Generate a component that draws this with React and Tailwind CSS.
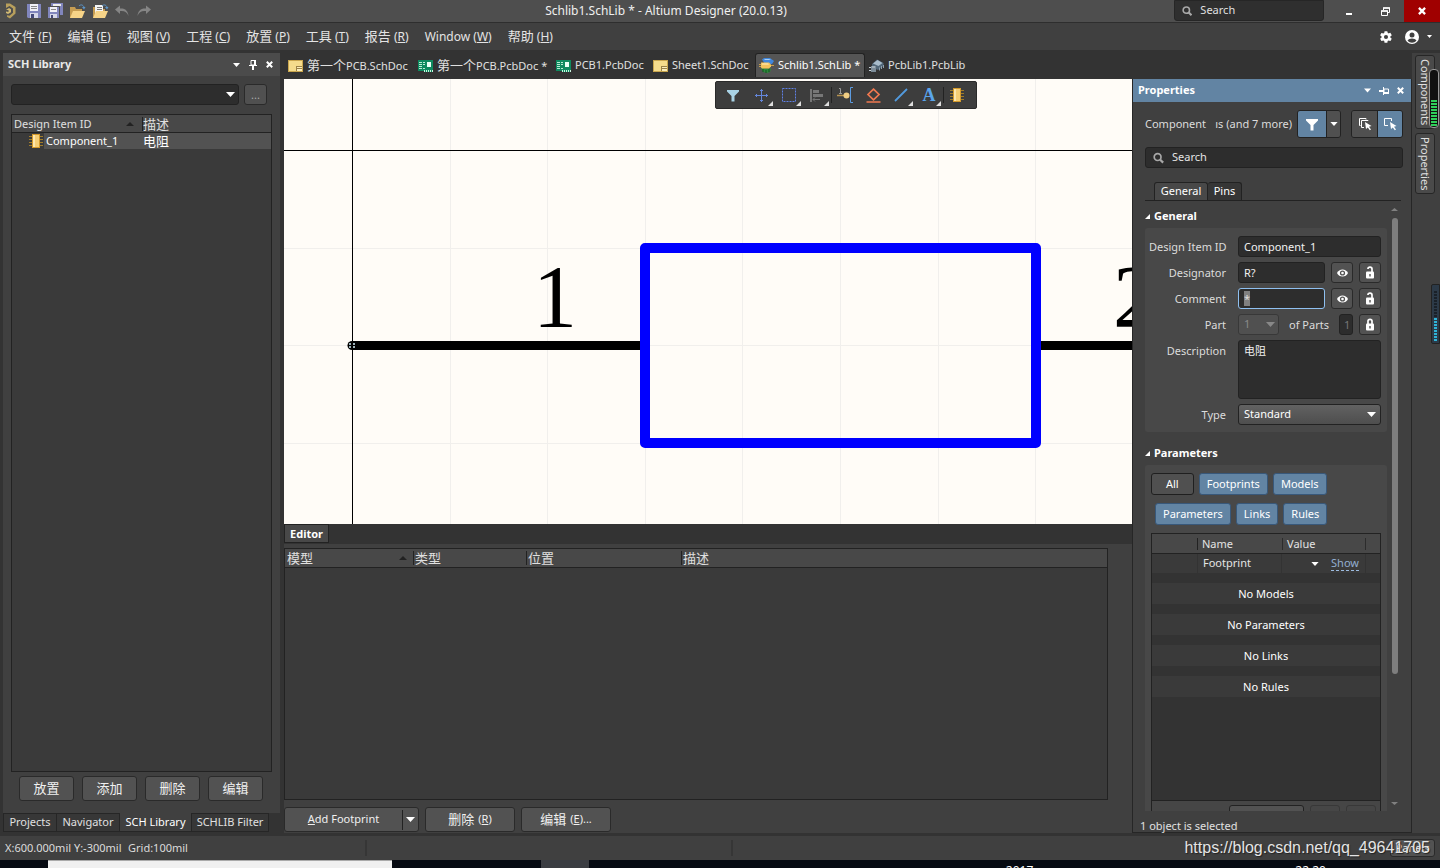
import React, { useEffect, useRef } from "react";

const menus = [
  ["文件", "F"],
  ["编辑", "E"],
  ["视图", "V"],
  ["工程", "C"],
  ["放置", "P"],
  ["工具", "T"],
  ["报告", "R"],
  ["Window", "W"],
  ["帮助", "H"],
];

const documents = [
  { name: "第一个PCB.SchDoc", kind: "sch", width: "w-[130px]" },
  { name: "第一个PCB.PcbDoc *", kind: "pcb", width: "w-[138px]" },
  { name: "PCB1.PcbDoc", kind: "pcb", width: "w-[97px]" },
  { name: "Sheet1.SchDoc", kind: "sch", width: "w-[106px]" },
  { name: "Schlib1.SchLib *", kind: "schlib", width: "w-[110px]", active: true },
  { name: "PcbLib1.PcbLib", kind: "pcblib", width: "w-[110px]" },
];

const button =
  "flex items-center justify-center rounded-[3px] border border-[#2a2a2a] bg-[#525252] text-[#f0f0f0]";
const field =
  "h-[21px] min-w-0 rounded-[3px] border border-[#222] bg-[#2d2d2d] px-[5px] text-[11px] text-[#f0f0f0] outline-none";

/* ---------- icons ---------- */

const Caret = ({ className = "text-white" }) => (
  <svg width="9" height="5" viewBox="0 0 9 5" className={className}>
    <path d="M0 0h9L4.500 5z" fill="currentColor" />
  </svg>
);

const SortMark = () => (
  <svg width="8" height="4" viewBox="0 0 8 4">
    <path d="M0 4h8L4 0z" fill="#222" />
  </svg>
);

const PinIcon = ({ sideways = false }) => (
  <svg width="10" height="10" viewBox="0 0 10 10" className={sideways ? "rotate-90" : ""}>
    <path d="M3 .5h4V5H3z" fill="none" stroke="#fff" />
    <path d="M6 0h2v6H6zM1 5h8v1H1zM4 6h2v4H4z" fill="#fff" />
  </svg>
);

const CrossIcon = ({ size = 7 }) => (
  <svg width={size} height={size} viewBox="0 0 7 7">
    <path d="M.8.8l5.400 5.400M6.200.8L.8 6.200" stroke="#fff" strokeWidth="2" />
  </svg>
);

const SearchIcon = () => (
  <svg width="12" height="12" viewBox="0 0 12 12" fill="none" stroke="#a8a8a8">
    <circle cx="5" cy="5" r="3.700" strokeWidth="1.800" />
    <path d="M7.800 7.800l3.200 3.200" strokeWidth="2.400" />
  </svg>
);

const Funnel = ({ color = "#fff" }) => (
  <svg width="14" height="13" viewBox="0 0 14 13">
    <path d="M1 1h12v1.500L8.500 7v5.500h-3V7L1 2.500z" fill={color} />
  </svg>
);

const ChipIcon = () => (
  <svg width="14" height="14" viewBox="0 0 14 14">
    <path d="M0 2.500h14M0 5.500h14M0 8.500h14M0 11.500h14" stroke="#a07c2a" />
    <rect x="3.500" y=".5" width="7" height="13" fill="#f6cf76" stroke="#d49a2c" />
    <path d="M4 1h2v12H4z" fill="#fde7ae" />
  </svg>
);

const LogoIcon = () => (
  <svg width="12" height="16" viewBox="0 0 12 16">
    <path d="M1 .5h4L10.500 4v6.500L5 15.500l-3-1.700v-1.600l2.500.6L8 9.700V5.500L4.500 3 1 5z" fill="#b89f5c" />
    <path d="M1 7l3-2 2 1.200v3L3 11 1 10v-1.500L3.500 9V7z" fill="#d0b873" />
  </svg>
);

const SaveIcon = () => (
  <svg width="14" height="14" viewBox="0 0 14 14">
    <path d="M0 0h14v14H1l-1-1z" fill="#8186bd" />
    <path d="M3 0h8v7H3z" fill="#f0f0f6" />
    <path d="M4 2.500h6M4 4.500h6" stroke="#888" />
    <path d="M3 9h8v5H3z" fill="#d6d8e8" />
    <path d="M4 10h3v4H4z" fill="#454a7a" />
  </svg>
);

const SaveAllIcon = () => (
  <svg width="16" height="16" viewBox="0 0 16 16">
    <path d="M4 0h12v12H4z" fill="#8186bd" />
    <path d="M6 1h8v2H6z" fill="#eee" />
    <path d="M.5 3.500h12v12H.5z" fill="#8186bd" stroke="#4d4d4d" />
    <path d="M3 4h7v5H3z" fill="#f0f0f6" />
    <path d="M4 6.500h5" stroke="#888" />
    <path d="M3 11h7v4H3z" fill="#d6d8e8" />
    <path d="M4 12h2v3H4z" fill="#454a7a" />
  </svg>
);

const OpenIcon = ({ withPage = false }) => (
  <svg width="17" height="15" viewBox="0 0 17 15">
    <path d="M1 3h5l1 2h6v9H1z" fill="#c79d52" />
    {withPage && (
      <>
        <path d="M3 1h8v9H3z" fill="#f4f4f4" />
        <path d="M5 3.500h5M5 5.500h5M5 7.500h5" stroke="#777" />
      </>
    )}
    <path d="M4 7h12l-3 7H1z" fill="#f7d488" />
    <path d="M10 2c2-2 4-1 5 1" fill="none" stroke="#5b95c9" />
    <path d="M13 3h3.500L15 5.500z" fill="#5b95c9" />
  </svg>
);

const UndoIcon = ({ flip = false }) => (
  <svg width="15" height="12" viewBox="0 0 15 12" className={flip ? "-scale-x-100" : ""}>
    <path d="M0 4.500L5 .5v3c5-.500 8 2 8.500 7.500C12 7 9.500 5.500 5 6v3z" fill="#858585" />
  </svg>
);

const DocIcon = ({ kind }) => {
  if (kind === "sch") {
    return (
      <svg width="15" height="12" viewBox="0 0 15 12">
        <rect x=".5" y=".5" width="14" height="11" fill="#f5dc8c" stroke="#c9a64e" />
        <path d="M8 6h6v5H8z" fill="#fbeebb" />
        <path d="M8 6.500h6M8 8.500h6M8.500 6v5" stroke="#9a8248" />
      </svg>
    );
  }
  if (kind === "pcb") {
    return (
      <svg width="15" height="12" viewBox="0 0 15 12">
        <path d="M0 0h15v12H6v-1H0z" fill="#0e8a5f" />
        <path d="M1 2.500h3M1 4.500h3M1 6.500h3M1 8.500h3M5 8.500h2M5 4.500h2M5 2.500h2" stroke="#b9ecd3" />
        <path d="M9 2h4v5H9z" fill="#e8fff4" />
        <path d="M6.500 12v-2M8.500 12v-2M10.500 12v-2M12.500 12v-2M14.500 12v-2" stroke="#c9f4df" />
      </svg>
    );
  }
  if (kind === "schlib") {
    return (
      <svg width="15" height="15" viewBox="0 0 15 15">
        <path d="M3 1.500L5 0h6l4 3-2 3H6z" fill="#3f86dc" />
        <path d="M5 1h5l2 1H6z" fill="#a8d0f8" />
        <path d="M2 10l2-1 1 2 2-1 1 1 3-1 1 1-1 3-3 1-4-1z" fill="#2c8a3a" />
        <path d="M4 11v3M7 12v3M10 11v3" stroke="#174f22" />
        <path d="M2 4.500h8l2 2v2l-2 2H3l-1-1z" fill="#f3c35c" />
        <path d="M3 5.500h6l1 1H3z" fill="#fff0bd" />
        <path d="M0 6.500h2M0 8.500h2M12 7.500h3" stroke="#caa04a" />
      </svg>
    );
  }
  return (
    <svg width="15" height="14" viewBox="0 0 15 14">
      <path d="M3 5l5-4.500L14.500 4v3L9 11 3 8.500z" fill="#52687a" />
      <path d="M4 4.500L8.500 1 13.500 4 9.500 7z" fill="#a8bccb" />
      <path d="M10.500 8.500v3M12.500 7v3M14.500 6v3" stroke="#8fa0ad" />
      <path d="M2 7h5v6H2z" fill="#7d8d99" />
      <path d="M0 8.500h2M0 11.500h2M3 8h3" stroke="#c9d4dc" />
    </svg>
  );
};

const EyeIcon = () => (
  <svg width="11" height="8" viewBox="0 0 11 8">
    <path d="M0 4C2-.700 9-.700 11 4 9 8.700 2 8.700 0 4z" fill="#fff" />
    <circle cx="5.500" cy="4" r="2.600" fill="#525252" />
    <circle cx="5.500" cy="4" r="1.300" fill="#fff" />
  </svg>
);

const LockIcon = ({ open = false }) => (
  <svg width="10" height="13" viewBox="0 0 10 13">
    <path d={open ? "M3 3V2.500C3 .7 7 .7 7 3v3" : "M3 6V3c0-2.300 4-2.300 4 0v3"} fill="none" stroke="#fff" strokeWidth="1.700" />
    <rect x="1" y="5.500" width="8" height="7" rx="1" fill="#fff" />
    <path d="M4.300 8h1.400v2.500H4.300z" fill="#525252" />
  </svg>
);

const GearIcon = () => (
  <svg width="14" height="14" viewBox="0 0 24 24">
    <path
      fill="#fff"
      d="M19.400 13a7.500 7.500 0 0 0 0-2l2.200-1.700a.6.6 0 0 0 .1-.7l-2-3.500a.6.6 0 0 0-.7-.2l-2.500 1a8 8 0 0 0-1.700-1L14.400 2.400a.5.500 0 0 0-.5-.4h-4a.5.500 0 0 0-.5.400L9 5a8 8 0 0 0-1.700 1l-2.500-1a.5.500 0 0 0-.6.200l-2 3.500a.5.500 0 0 0 .1.600L4.500 11a7.500 7.500 0 0 0 0 2l-2.200 1.700a.5.500 0 0 0-.1.600l2 3.500c.1.200.4.300.6.200l2.500-1A8 8 0 0 0 9 19l.4 2.600c0 .2.200.4.500.4h4c.2 0 .5-.2.500-.4l.4-2.600a8 8 0 0 0 1.700-1l2.500 1c.2.100.5 0 .6-.2l2-3.500a.5.500 0 0 0-.1-.6zM12 15.500a3.500 3.500 0 1 1 0-7 3.500 3.500 0 0 1 0 7z"
    />
  </svg>
);

const UserIcon = () => (
  <svg width="14" height="14" viewBox="0 0 14 14">
    <circle cx="7" cy="7" r="7" fill="#fff" />
    <circle cx="7" cy="5" r="2.500" fill="#404040" />
    <path d="M2.500 10.500C4 7.700 10 7.700 11.500 10.500 9 13.500 5 13.500 2.500 10.500z" fill="#404040" />
  </svg>
);

const PickIcon = ({ stacked = false }) => (
  <svg width="14" height="14" viewBox="0 0 14 14" fill="none" stroke="#fff">
    {stacked ? <path d="M8 2.500V1.500H1.500v7h1M10 4V3.500H3.500v7H6" /> : <path d="M8.500 4V1.500h-7v7H5" />}
    <path d="M7 5l6.500 4-2.500.7 2 2.800-1.200.8-2-2.800L8 12z" fill="#fff" stroke="none" />
  </svg>
);

/* ---------- top bars ---------- */

const TitleBar = () => (
  <header className="relative flex h-[23px] shrink-0 items-center border-b border-[#2e2e2e] bg-[#4e4e4e]">
    <div className="flex items-center gap-[6px] pl-[5px]">
      <span className="mr-1"><LogoIcon /></span>
      <button aria-label="Save"><SaveIcon /></button>
      <button aria-label="Save all"><SaveAllIcon /></button>
      <button aria-label="Open"><OpenIcon /></button>
      <button aria-label="Open document"><OpenIcon withPage /></button>
      <button aria-label="Undo"><UndoIcon /></button>
      <button aria-label="Redo"><UndoIcon flip /></button>
    </div>
    <h1 className="pointer-events-none absolute inset-x-0 pr-[108px] text-center text-[12px] text-[#f0f0f0]">
      Schlib1.SchLib * - Altium Designer (20.0.13)
    </h1>
    <div className="relative ml-auto flex h-full items-start">
      <label className="flex h-[21px] w-[150px] items-center gap-2 rounded-b-[3px] border border-[#262626] bg-[#2f2f2f] px-[7px]">
        <SearchIcon />
        <input placeholder="Search" className="w-full bg-transparent text-[11px] outline-none placeholder:text-[#e0e0e0]" />
      </label>
      <span className="w-[6px]" />
      <button aria-label="Minimize" className="flex h-[22px] w-[37px] items-center justify-center pt-[5px]">
        <span className="h-[2px] w-[6px] bg-white" />
      </button>
      <button aria-label="Restore" className="flex h-[22px] w-[37px] items-center justify-center">
        <svg width="9" height="9" viewBox="0 0 9 9" fill="none" stroke="#fff">
          <path d="M2.500 3V1h6v4.500H7M.5 4h6v4.500h-6z" />
          <path d="M0 4h7M2 1h7" strokeWidth="1.500" />
        </svg>
      </button>
      <button aria-label="Close" className="flex h-[22px] w-9 items-center justify-center bg-[#a00000]">
        <CrossIcon size={8} />
      </button>
    </div>
  </header>
);

const MenuBar = () => (
  <nav className="flex h-[27px] shrink-0 items-center bg-[#404040] pl-[9px] text-[13px] text-[#e4e4e4]">
    <div className="flex flex-1 gap-4">
      {menus.map(([label, key]) => (
        <button key={key} className="whitespace-nowrap">
          <span className={label === "Window" ? "text-[12px]" : ""}>{label}</span>
          <span className="text-[12px]"> (<u>{key}</u>)</span>
        </button>
      ))}
    </div>
    <button aria-label="Settings" className="mr-3"><GearIcon /></button>
    <button aria-label="Account" className="mr-2 flex items-center gap-2">
      <UserIcon />
      <svg width="5" height="3" viewBox="0 0 5 3"><path d="M0 0h5L2.500 3z" fill="#fff" /></svg>
    </button>
  </nav>
);

const DocumentTabs = () => (
  <div className="flex h-[29px] shrink-0 items-end bg-[#333]">
    {documents.map((doc) => (
      <button
        key={doc.name}
        className={`${doc.width} mb-[2px] flex h-[24px] items-center gap-1 whitespace-nowrap rounded-t-[3px] border border-b-0 pl-[3px] text-[11px] ${
          doc.active ? "border-[#222] bg-[#555] text-white" : "border-transparent text-[#e0e0e0]"
        }`}
      >
        <span className="shrink-0"><DocIcon kind={doc.kind} /></span>
        <span>
          {doc.name.startsWith("第") ? (
            <><span className="text-[13px]">第一个</span>{doc.name.slice(3)}</>
          ) : (
            doc.name
          )}
        </span>
      </button>
    ))}
  </div>
);

/* ---------- left panel ---------- */

const LibraryPanel = () => (
  <aside className="ml-[3px] mt-[3px] flex w-[277px] shrink-0 flex-col">
    <div className="flex h-[23px] shrink-0 items-center gap-2 bg-[#4b4b4b] pl-[5px] pr-[7px]">
      <h2 className="flex-1 text-[11px] font-bold text-[#e8e8e8]">SCH Library</h2>
      <button aria-label="Panel menu"><Caret className="h-[4px] w-[7px] text-white" /></button>
      <button aria-label="Pin panel"><PinIcon /></button>
      <button aria-label="Close panel"><CrossIcon /></button>
    </div>
    <div className="flex min-h-0 flex-1 flex-col bg-[#404040] px-2 pt-2">
      <div className="mb-[9px] flex h-[21px] shrink-0 gap-[5px]">
        <button aria-label="Component filter" className="flex w-[228px] items-center justify-end rounded-[3px] border border-[#222] bg-[#2d2d2d] pr-[3px]">
          <Caret />
        </button>
        <button className="w-[23px] rounded-[3px] border border-[#2a2a2a] bg-[#505050] text-[11px] leading-[16px] text-[#aaa]">...</button>
      </div>
      <div className="min-h-0 flex-1 border border-[#222] bg-[#3a3a3a]">
        <table className="w-full table-fixed border-separate border-spacing-0 text-left text-[11px] text-[#e0e0e0]">
          <thead>
            <tr className="h-[18px] bg-[#484848] leading-[16px]">
              <th className="w-[130px] border-b border-[#222] p-0 pl-[2px] font-normal">
                <span className="flex items-center justify-between pr-2">Design Item ID <SortMark /></span>
              </th>
              <th className="border-b border-[#222] p-0 text-[13px] font-normal">
                <span className="block border-l border-[#222] leading-[14px]">描述</span>
              </th>
            </tr>
          </thead>
          <tbody>
            <tr className="h-4 text-white">
              <td className="p-0 pl-[17px]">
                <span className="flex items-center gap-px">
                  <ChipIcon />
                  <span className="flex-1 bg-[#525252] pl-[2px] leading-4">Component_1</span>
                </span>
              </td>
              <td className="bg-[#525252] p-0 pl-px text-[13px] leading-[14px]">
                <span className="block">电阻</span>
              </td>
            </tr>
          </tbody>
        </table>
      </div>
      <div className="flex h-[41px] shrink-0 gap-2 pl-2 pt-[4px]">
        {["放置", "添加", "删除", "编辑"].map((label) => (
          <button key={label} className={`${button} h-[25px] w-[55px] text-[13px]`}>{label}</button>
        ))}
      </div>
    </div>
    <div className="flex h-[20px] shrink-0 items-start text-[11px] text-[#e0e0e0]">
      <button className="h-[19px] w-[54px] border border-[#262626] bg-[#373737]">Projects</button>
      <button className="h-[19px] w-[63px] border border-l-0 border-[#262626] bg-[#373737]">Navigator</button>
      <button className="h-[19px] w-[71px] border-b border-[#262626] bg-[#404040] text-white">SCH Library</button>
      <button className="h-[19px] w-[78px] border border-[#262626] bg-[#373737]">SCHLIB Filter</button>
    </div>
  </aside>
);

/* ---------- schematic canvas ---------- */

const gridX = [68, 166, 263, 361, 458, 556, 654, 751, 849, 947];
const gridY = [71, 169, 266, 364, 462];

const CanvasTool = ({ label, more = false, divider = false, children }) => (
  <button
    aria-label={label}
    className={`relative flex h-full w-7 items-center justify-center ${divider ? "before:absolute before:left-0 before:h-4 before:w-px before:bg-[#222]" : ""}`}
  >
    {children}
    {more && (
      <svg width="5" height="5" viewBox="0 0 5 5" className="absolute bottom-[2px] right-[2px]">
        <path d="M5 0v5H0z" fill="#ddd" />
      </svg>
    )}
  </button>
);

const CanvasToolbar = () => (
  <div className="absolute left-[431px] top-[2px] flex h-7 items-center rounded-[2px] border border-[#2a2a2a] bg-[#3d3d3d] pl-[3px] pr-[5px]">
    <CanvasTool label="Selection filter"><Funnel color="#a9d3e6" /></CanvasTool>
    <CanvasTool label="Move" more>
      <svg width="13" height="13" viewBox="0 0 13 13"><path d="M6.500 0v13M0 6.500h13M5 1.500h3M5 11.500h3M1.500 5v3M11.500 5v3" stroke="#6487dc" /></svg>
    </CanvasTool>
    <CanvasTool label="Select" more>
      <svg width="14" height="14" viewBox="0 0 14 14"><rect x=".5" y=".5" width="13" height="13" fill="none" stroke="#5f80e6" strokeDasharray="2 1" /></svg>
    </CanvasTool>
    <CanvasTool label="Align" more>
      <svg width="14" height="13" viewBox="0 0 14 13" fill="#777"><path d="M0 0h2v13H0zM3 1h6v3H3zM3 5h10v3H3z" /><path d="M3 10.500h7M5 8.500l-2 2 2 2" fill="none" stroke="#777" /></svg>
    </CanvasTool>
    <CanvasTool label="Place pin" divider>
      <svg width="16" height="16" viewBox="0 0 16 16">
        <path d="M2 1.500h1.500v5M2 6.500h3" fill="none" stroke="#999" />
        <path d="M0 8.500h8" stroke="#b6924f" strokeWidth="1.500" />
        <circle cx="9.500" cy="8.500" r="3" fill="#f0cd84" />
        <path d="M16 .5h-2.500v15H16" fill="none" stroke="#5c9be0" />
      </svg>
    </CanvasTool>
    <CanvasTool label="IEEE symbols">
      <svg width="15" height="15" viewBox="0 0 15 15" fill="none" stroke="#f07850" strokeWidth="1.700"><path d="M7.500 1.200l5.500 5.300-5.500 5.300L2 6.500zM.5 14h14" /></svg>
    </CanvasTool>
    <CanvasTool label="Place line" more>
      <svg width="14" height="14" viewBox="0 0 14 14"><path d="M1 13L13 1" stroke="#529ade" strokeWidth="1.800" /></svg>
    </CanvasTool>
    <CanvasTool label="Place text" more>
      <span className="font-['Liberation_Serif',serif] text-[18px] font-bold leading-none text-[#5aa5ec]">A</span>
    </CanvasTool>
    <CanvasTool label="Add component part" divider><ChipIcon /></CanvasTool>
  </div>
);

const SchematicCanvas = () => (
  <div className="relative min-h-0 flex-1 overflow-hidden bg-[#fffcf7]">
    <svg className="absolute inset-0 h-full w-full" fill="none">
      {gridX.map((x) => (
        <line key={x} x1={x + 0.5} x2={x + 0.5} y1="0" y2="100%" stroke="#f1efec" />
      ))}
      {gridY.map((y) => (
        <line key={y} y1={y + 0.5} y2={y + 0.5} x1="0" x2="100%" stroke="#f1efec" />
      ))}
      <path d="M68 266.500H361M751 266.500H1200" stroke="#000" strokeWidth="9" />
      <rect x="361" y="169" width="391" height="195" stroke="#00f" strokeWidth="10" strokeLinejoin="round" />
      <line x1="68.500" x2="68.500" y1="0" y2="100%" stroke="#000" />
      <line x1="0" x2="100%" y1="71.500" y2="71.500" stroke="#000" />
      <circle cx="68" cy="266.500" r="4.500" fill="#000" />
      <path d="M65 264h2v2h-2zM69 264h2v2h-2zM65 267h2v2h-2zM69 267h2v2h-2z" fill="#9fb4ba" />
      <g fill="#000" fontSize="88" fontFamily="'Liberation Serif', serif">
        <text x="249" y="247">1</text>
        <text x="829" y="247">2</text>
      </g>
    </svg>
    <CanvasToolbar />
  </div>
);

const ModelEditor = () => (
  <section className="flex h-[309px] shrink-0 flex-col">
    <div className="flex h-5 shrink-0 items-start bg-[#333]">
      <button className="h-[19px] w-[45px] border border-[#222] bg-[#484848] text-[11px] font-bold leading-4 text-white">Editor</button>
    </div>
    <div className="flex flex-1 flex-col bg-[#404040] pt-1">
      <div className="mr-6 flex-1 border border-[#222] bg-[#3a3a3a]">
        <table className="w-full table-fixed border-separate border-spacing-0 text-left text-[13px] text-[#e0e0e0]">
          <thead>
            <tr className="h-[19px] bg-[#484848] leading-[14px]">
              <th className="w-[128px] border-b border-[#222] p-0 pl-[2px] font-normal">
                <span className="flex items-center justify-between pr-[6px]">模型 <SortMark /></span>
              </th>
              {[["类型", "w-[113px]"], ["位置", "w-[155px]"], ["描述", ""]].map(([label, width]) => (
                <th key={label} className={`${width} border-b border-[#222] p-0 font-normal`}>
                  <span className="block border-l border-[#222] pl-px">{label}</span>
                </th>
              ))}
            </tr>
          </thead>
        </table>
      </div>
      <div className="flex h-[33px] shrink-0 gap-[6px] pt-[7px] text-[11px]">
        <div className={`${button} h-[25px] w-[135px]`}>
          <button className="flex-1"><u>A</u>dd Footprint</button>
          <button aria-label="Footprint options" className="flex h-5 w-4 items-center justify-center border-l border-[#222]"><Caret /></button>
        </div>
        <button className={`${button} h-[25px] w-[90px] gap-1`}><span className="text-[13px]">删除</span><span>(<u>R</u>)</span></button>
        <button className={`${button} h-[25px] w-[90px] gap-1`}><span className="text-[13px]">编辑</span><span>(<u>E</u>)...</span></button>
      </div>
    </div>
  </section>
);

/* ---------- properties panel ---------- */

const SectionTitle = ({ children }) => (
  <h3 className="flex h-4 items-center gap-1 text-[11px] font-bold text-white">
    <svg width="5" height="5" viewBox="0 0 5 5"><path d="M5 0v5H0z" fill="#fff" /></svg>
    {children}
  </h3>
);

const Row = ({ label, id, children }) => (
  <div className="flex gap-3">
    <label htmlFor={id} className="w-[77px] shrink-0 whitespace-nowrap text-right leading-[21px]">{label}</label>
    <div className="flex min-w-0 flex-1 items-start gap-[6px]">{children}</div>
  </div>
);

const IconButton = ({ label, children }) => (
  <button aria-label={label} className={`${button} h-[21px] w-[22px] shrink-0`}>{children}</button>
);

const FilterChip = ({ children, on = true }) => (
  <button
    className={`h-[22px] rounded-[3px] border text-[11px] text-white ${
      on ? "border-[#38587a] bg-[#6284a3] px-[7px]" : "border-[#1f1f1f] bg-[#505050] px-[14px]"
    }`}
  >
    {children}
  </button>
);

const GeneralSection = () => {
  const commentRef = useRef(null);

  // the comment value starts out selected, ready to be overwritten
  useEffect(() => {
    commentRef.current.focus();
    commentRef.current.select();
  }, []);

  return (
    <div className="flex flex-col gap-[5px] rounded-[3px] bg-[#484848] pb-[7px] pl-1 pr-[6px] pt-2 text-[11px] text-[#dcdcdc]">
      <Row label="Design Item ID" id="item-id">
        <input id="item-id" defaultValue="Component_1" className={`${field} w-full`} />
      </Row>
      <Row label="Designator" id="designator">
        <input id="designator" defaultValue="R?" className={`${field} flex-1`} />
        <IconButton label="Show designator"><EyeIcon /></IconButton>
        <IconButton label="Lock designator"><LockIcon open /></IconButton>
      </Row>
      <Row label="Comment" id="comment">
        <input
          id="comment"
          ref={commentRef}
          defaultValue="*"
          className={`${field} flex-1 selection:bg-[#808080] selection:text-[#ddd] focus:border-[#8fc0f0]`}
        />
        <IconButton label="Show comment"><EyeIcon /></IconButton>
        <IconButton label="Lock comment"><LockIcon open /></IconButton>
      </Row>
      <Row label="Part" id="part">
        <div className="relative w-[41px] shrink-0">
          <select id="part" disabled className="block h-[21px] w-full appearance-none rounded-[3px] border border-[#383838] bg-[#505050] px-[5px] text-[#8a8a8a]">
            <option>1</option>
          </select>
          <Caret className="pointer-events-none absolute right-[4px] top-2 text-[#888]" />
        </div>
        <label htmlFor="part-count" className="flex-1 whitespace-nowrap text-center leading-[21px]">of Parts</label>
        <input id="part-count" disabled defaultValue="1" className="h-[21px] w-[14px] rounded-[3px] border border-[#222] bg-[#2d2d2d] pl-[4px] text-[#777]" />
        <IconButton label="Lock part"><LockIcon /></IconButton>
      </Row>
      <Row label="Description" id="description">
        <textarea id="description" defaultValue="电阻" className="block h-[59px] w-full resize-none rounded-[3px] border border-[#222] bg-[#2d2d2d] px-[5px] py-[2px] leading-4 text-[#f0f0f0] outline-none" />
      </Row>
      <Row label="Type" id="type">
        <div className="relative w-full">
          <select id="type" className="block h-[21px] w-full appearance-none rounded-[3px] border border-[#222] bg-linear-to-b from-[#626262] to-[#4e4e4e] px-[5px] text-white outline-none">
            <option>Standard</option>
          </select>
          <Caret className="pointer-events-none absolute right-[5px] top-2 text-white" />
        </div>
      </Row>
    </div>
  );
};

const ParametersSection = () => (
  <div className="flex min-h-0 flex-1 flex-col overflow-hidden rounded-t-[3px] bg-[#484848] px-[6px] pt-2">
    <div className="mb-2 flex gap-[5px]">
      <FilterChip on={false}>All</FilterChip>
      <FilterChip>Footprints</FilterChip>
      <FilterChip>Models</FilterChip>
    </div>
    <div className="mb-2 flex gap-[5px] pl-1">
      <FilterChip>Parameters</FilterChip>
      <FilterChip>Links</FilterChip>
      <FilterChip>Rules</FilterChip>
    </div>
    <div className="min-h-0 flex-1 border border-b-0 border-[#222] bg-[#333] text-[11px] text-[#e4e4e4]">
      <table className="w-full table-fixed border-separate border-spacing-0 text-left">
        <thead>
          <tr className="h-5 bg-[#484848]">
            <th className="w-[45px] border-b border-[#222] p-0" />
            <th className="w-[85px] border-b border-[#222] p-0 font-normal leading-3"><span className="block border-l border-[#222] pl-1">Name</span></th>
            <th className="w-[84px] border-b border-[#222] p-0 font-normal leading-3"><span className="block border-x border-[#2c2c2c] pl-1">Value</span></th>
            <th className="border-b border-[#222] p-0" />
          </tr>
        </thead>
        <tbody>
          <tr className="h-[19px] bg-[#3a3a3a]">
            <td className="p-0" />
            <td className="border-x border-[#333] p-0 pl-[5px]">Footprint</td>
            <td className="border-r border-[#333] p-0 pr-[6px]">
              <span className="flex items-center justify-end gap-3">
                <Caret className="h-[4px] w-2 text-white" />
                <a href="#show" className="border-b border-dashed border-[#9dbce0] leading-[14px] text-[#93aed0]">Show</a>
              </span>
            </td>
            <td className="p-0" />
          </tr>
          {["No Models", "No Parameters", "No Links", "No Rules"].map((text) => (
            <tr key={text} className="h-[31px]">
              <td colSpan={4} className="p-0 pt-[10px] text-center text-white">
                <span className="block bg-[#3a3a3a] leading-[21px]">{text}</span>
              </td>
            </tr>
          ))}
        </tbody>
      </table>
    </div>
    <div className="flex h-[11px] shrink-0 items-start justify-end gap-[6px] overflow-hidden border border-b-0 border-[#222] bg-[#464646] pr-[4px] pt-[4px]">
      <button aria-label="Add" className="h-[21px] w-[75px] shrink-0 rounded-[3px] border border-[#222] bg-[#525252]" />
      <button aria-label="Edit" className="h-[21px] w-[30px] shrink-0 rounded-[3px] border border-[#383838]" />
      <button aria-label="Delete" className="h-[21px] w-[30px] shrink-0 rounded-[3px] border border-[#383838]" />
    </div>
  </div>
);

const PropertiesPanel = () => (
  <aside className="flex w-[280px] shrink-0 flex-col border border-t-0 border-[#262626] bg-[#404040]">
    <div className="flex h-[23px] shrink-0 items-center gap-2 bg-[#6284a3] pl-[5px] pr-[7px]">
      <h2 className="flex-1 text-[11px] font-bold text-white">Properties</h2>
      <button aria-label="Panel menu"><Caret className="h-[5px] w-[7px] text-white" /></button>
      <button aria-label="Pin panel"><PinIcon sideways /></button>
      <button aria-label="Close panel"><CrossIcon /></button>
    </div>
    <div className="flex min-h-0 flex-1 flex-col pl-3">
      <div className="mr-2 mt-2 flex h-7 shrink-0 items-center text-[11px] text-[#dcdcdc]">
        <span>Component</span>
        <span className="flex-1 pr-[5px] text-right">ıs (and 7 more)</span>
        <div className="mr-[10px] flex h-7 overflow-hidden rounded-[3px] border border-[#222]">
          <button aria-label="Selection filter" className="flex w-7 items-center justify-center bg-[#6284a3]"><Funnel /></button>
          <button aria-label="Filter options" className="flex w-[14px] items-center justify-center border-l border-[#222] bg-[#505050]"><Caret className="h-[4px] w-2 text-white" /></button>
        </div>
        <div className="flex h-7 overflow-hidden rounded-[3px] border border-[#222]">
          <button aria-label="Select multiple" className="flex w-[25px] items-center justify-center bg-[#505050]"><PickIcon stacked /></button>
          <button aria-label="Select single" className="flex w-[25px] items-center justify-center border-l border-[#222] bg-[#6284a3]"><PickIcon /></button>
        </div>
      </div>
      <label className="mr-2 mt-[9px] flex h-[21px] shrink-0 items-center gap-2 rounded-[3px] border border-[#222] bg-[#2d2d2d] px-[7px]">
        <SearchIcon />
        <input placeholder="Search" className="w-full bg-transparent text-[11px] outline-none placeholder:text-[#e4e4e4]" />
      </label>
      <div className="mr-[10px] mt-[14px] flex h-[19px] shrink-0 border-b border-[#222] pl-[9px] text-[11px] text-white">
        <button className="w-[54px] rounded-t-[3px] border border-b-0 border-[#222] bg-[#484848]">General</button>
        <button className="w-[34px] rounded-t-[3px] border border-b-0 border-l-0 border-[#222] bg-[#363636]">Pins</button>
      </div>
      <div className="flex min-h-0 flex-1 pt-[7px]">
        <div className="flex min-h-0 min-w-0 flex-1 flex-col">
          <SectionTitle>General</SectionTitle>
          <div className="h-[4px] shrink-0" />
          <GeneralSection />
          <div className="h-[13px] shrink-0" />
          <SectionTitle>Parameters</SectionTitle>
          <div className="h-[4px] shrink-0" />
          <ParametersSection />
        </div>
        <div className="flex w-6 flex-col items-center pb-[6px] pr-[9px]">
          <svg width="7" height="3" viewBox="0 0 7 3"><path d="M0 3h7L3.500 0z" fill="#808080" /></svg>
          <div className="my-[7px] w-[6px] flex-1">
            <div className="h-[79%] rounded-full bg-[#7e7e7e]" />
          </div>
          <svg width="7" height="3" viewBox="0 0 7 3"><path d="M0 0h7L3.500 3z" fill="#808080" /></svg>
        </div>
      </div>
    </div>
    <p className="h-[21px] shrink-0 pl-[7px] text-[11px] leading-[29px] text-[#e0e0e0]">1 object is selected</p>
  </aside>
);

/* ---------- right edge ---------- */

// a column of lit bars, two pixels on and one off
const MeterBars = ({ count, color }) => (
  <div className="flex flex-col gap-px">
    {Array.from({ length: count }, (_, i) => (
      <span key={i} className={`h-[2px] ${color}`} />
    ))}
  </div>
);

const SideTabs = () => (
  <div className="relative mt-[3px] flex w-[28px] shrink-0 flex-col gap-[4px] bg-[#404040] pl-[3px] pt-[2px]">
    <button className="h-[74px] w-5 rounded-[3px] border border-[#262626] bg-[#4a4a4a] text-[11px] leading-4 text-[#e0e0e0] [writing-mode:vertical-rl]">Components</button>
    <button className="h-[61px] w-5 rounded-[3px] border border-[#262626] bg-[#4a4a4a] text-[11px] leading-4 text-[#e0e0e0] [writing-mode:vertical-rl]">Properties</button>
    {/* load meters float over the window edge */}
    <div className="absolute right-px top-4 flex h-[59px] w-[10px] flex-col justify-end rounded-[4px] border border-[#999] bg-[#111] p-px">
      <MeterBars count={9} color="bg-[#2fd05a]" />
    </div>
    <div className="absolute right-0 top-[231px] flex h-[60px] w-[9px] flex-col justify-end gap-px rounded-l-[2px] border border-[#222] bg-[#2c3a48] p-[2px]">
      <MeterBars count={9} color="bg-[#1a2129]" />
      <MeterBars count={8} color="bg-[#2fb4d8]" />
    </div>
  </div>
);

const StatusBar = () => (
  <footer className="relative flex h-[24px] shrink-0 items-center bg-[#404040] pl-[5px] pr-[5px] text-[11px] text-[#dcdcdc]">
    <span className="w-[123px]">X:600.000mil Y:-300mil</span>
    <span className="w-[237px]">Grid:100mil</span>
    <span className="h-4 w-[368px] border-x-2 border-[#363636]" />
    <button className={`${button} ml-auto h-[18px] w-[45px]`}>Panels</button>
    <span className="absolute right-[10px] font-['Liberation_Sans',sans-serif] text-[16px] text-[#e4e4e4] [text-shadow:1px_1px_1px_#222]">
      https://blog.csdn.net/qq_49641705
    </span>
  </footer>
);

const Taskbar = () => (
  <div className="flex h-2 shrink-0 overflow-hidden bg-[#060a12] text-[12px] leading-4 text-white">
    <div className="ml-12 w-[344px] border-t border-[#aaa] bg-[#f0f0f0]" />
    <div className="ml-[149px] w-12 bg-[#3a3d42]" />
    <div className="flex flex-1 justify-end pr-[114px] pt-[3px]">
      <span className="mr-[262px]">2017</span>
      <span>22:20</span>
    </div>
  </div>
);

const App = () => (
  <div className="flex h-screen min-h-[700px] flex-col overflow-hidden bg-[#333] font-['Noto_Sans','Noto_Sans_CJK_SC',sans-serif]">
    <TitleBar />
    <MenuBar />
    <main className="flex min-h-0 flex-1 pb-[3px]">
      <LibraryPanel />
      <div className="ml-[4px] flex min-w-0 flex-1 flex-col">
        <DocumentTabs />
        <div className="flex min-h-0 flex-1">
          <div className="flex min-w-0 flex-1 flex-col">
            <SchematicCanvas />
            <ModelEditor />
          </div>
          <PropertiesPanel />
        </div>
      </div>
      <SideTabs />
    </main>
    <StatusBar />
    <Taskbar />
  </div>
);

export default App;
